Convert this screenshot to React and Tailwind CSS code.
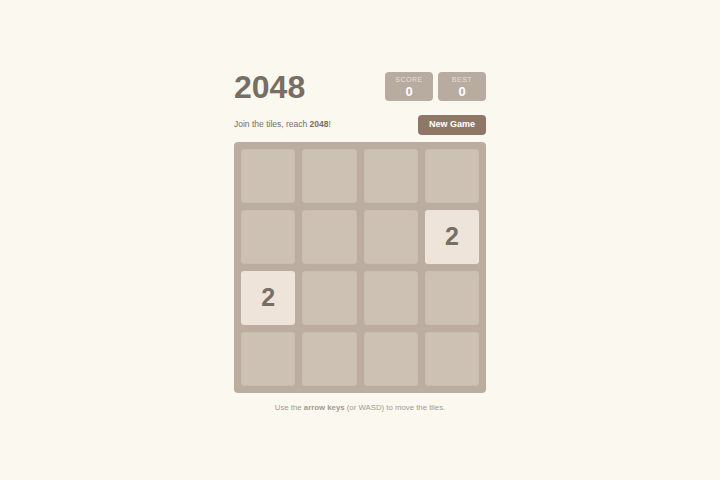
import { useState } from "react"

// starting board: two tiles placed
const initialBoard = [
  [0, 0, 0, 0],
  [0, 0, 0, 2],
  [2, 0, 0, 0],
  [0, 0, 0, 0],
]

function ScoreBox({ label, value }) {
  return (
    <div className="w-[48px] h-[29px] bg-[#b8ab9f] rounded-[4px] flex flex-col items-center justify-center leading-none">
      <span className="text-[7px] tracking-[0.5px] uppercase text-[#e9dfd4]">{label}</span>
      <span className="text-[13px] font-bold text-white mt-[2px]">{value}</span>
    </div>
  )
}

export default function App() {
  const [board] = useState(initialBoard)
  const [score] = useState(0)
  const [best] = useState(0)

  return (
    <div
      className="min-h-screen bg-[#fbf8ef] flex items-center justify-center pt-[4px]"
      style={{ fontFamily: '"Liberation Sans", Arial, sans-serif' }}
    >
      <div className="w-[252px]">
        {/* Header */}
        <div className="flex items-center justify-between">
          <h1 className="text-[32px] font-bold text-[#776e65] leading-none">2048</h1>
          <div className="flex gap-[5px]">
            <ScoreBox label="Score" value={score} />
            <ScoreBox label="Best" value={best} />
          </div>
        </div>

        {/* Intro row */}
        <div className="flex items-center justify-between mt-[12px]">
          <p className="text-[8.5px] text-[#776e65]">
            Join the tiles, reach <strong>2048</strong>!
          </p>
          <button className="w-[68px] h-[20px] bg-[#8f7768] text-white text-[9px] font-bold rounded-[4px]">
            New Game
          </button>
        </div>

        {/* Board */}
        <div className="mt-[7px] bg-[#bbada0] rounded-[4px] p-[7px] grid grid-cols-4 gap-[7px]">
          {board.flat().map((v, i) => (
            <div
              key={i}
              className={
                v
                  ? "h-[54px] rounded-[3px] bg-[#eee4da] flex items-center justify-center text-[25px] font-bold text-[#776e65]"
                  : "h-[54px] rounded-[3px] bg-[#cdc1b4] shadow-[inset_0_0_2px_rgba(0,0,0,0.06)]"
              }
            >
              {v || ""}
            </div>
          ))}
        </div>

        {/* Footer */}
        <p className="mt-[9px] text-center text-[7.8px] text-[#a39a90]">
          Use the <strong>arrow keys</strong> (or WASD) to move the tiles.
        </p>
      </div>
    </div>
  )
}
